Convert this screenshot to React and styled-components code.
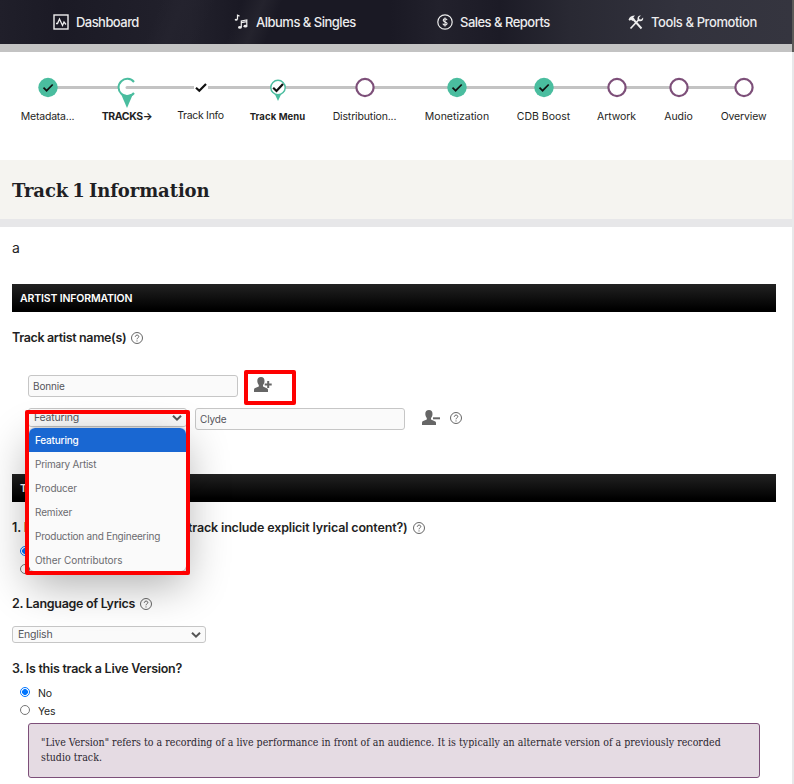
import React from "react"
import styled, { createGlobalStyle, css } from "styled-components"

const GlobalStyle = createGlobalStyle`
  * {
    box-sizing: border-box;
  }

  body {
    margin: 0;
    background: #fff;
    color: #1f1f24;
    font-family: Inter, "Liberation Sans", Arial, sans-serif;
    font-size: 11px;
    overflow: hidden;
  }
`

const Page = styled.div`
  width: 794px;
  height: 784px;
  display: grid;
  grid-template-columns: 792px 2px;
  overflow: hidden;
`

const Scrollbar = styled.div`
  background: linear-gradient(#5b5a58 52px, #e8e8ea 52px);
`

const Main = styled.main`
  overflow: hidden;
`

const Nav = styled.nav`
  height: 52px;
  padding-left: 53px;
  display: grid;
  grid-template-columns: 181px 203px 191px auto;
  border-bottom: 8px solid #c3c3c3;
  background:
    linear-gradient(112deg, transparent 150px, #24232e 170px, transparent 200px),
    linear-gradient(112deg, transparent 225px, #24232d 245px, transparent 262px),
    linear-gradient(90deg, #201f2a 0, #1b1a25 60px, #22212c 190px, #1a1924 240px, #1a1924 390px, #22212c 440px, #1c1b26 500px, #292933 570px, #32323d 680px, #35353f 792px);
  background-clip: padding-box;
`

const NavItem = styled.a`
  display: flex;
  align-items: center;
  gap: ${(p) => p.$gap}px;
  height: 44px;
  color: #ececee;
  font-size: 13px;
  font-weight: 500;
  letter-spacing: ${(p) => p.$spacing}px;
  white-space: nowrap;

  svg {
    flex: none;
  }

  span {
    padding-bottom: 1px;
  }
`

const Steps = styled.ol`
  height: 108px;
  margin: 0;
  padding: 24px 0 0 21px;
  display: flex;
  gap: 26px;
  list-style: none;
  background: linear-gradient(#c3c3c3, #c3c3c3) no-repeat 47px 34px / 696px 3px;
`

const Step = styled.li`
  width: ${(p) => p.$width}px;
  flex: none;
  display: flex;
  flex-direction: column;
  align-items: center;

  svg {
    display: block;
    flex: none;
  }
`

const StepLabel = styled.span`
  margin-top: ${(p) => (p.$raised ? 0 : 1)}px;
  font-size: ${(p) => p.$size || 10.5}px;
  line-height: 16px;
  font-weight: ${(p) => (p.$bold ? 700 : 400)};
  letter-spacing: ${(p) => p.$spacing || 0}px;
  white-space: nowrap;
`

const TitleBar = styled.header`
  height: 67px;
  padding-left: 12px;
  background: #f5f4f0;
  border-bottom: 8px solid #e7e7e9;
`

const Title = styled.h1`
  margin: 0;
  font-family: "DejaVu Serif", serif;
  font-size: 18px;
  line-height: 61px;
  font-weight: 700;
  letter-spacing: -0.1px;
  word-spacing: -2px;
`

const Content = styled.section`
  padding: 0 16px 0 12px;
`

const TrackName = styled.p`
  height: 57px;
  margin: 0;
  font-size: 14px;
  line-height: 42px;
`

const SectionBar = styled.h2`
  height: 28px;
  margin: 0;
  padding-left: 8px;
  color: #fff;
  background: linear-gradient(#222, #000 90%);
  font-size: 10.5px;
  line-height: 29px;
  font-weight: 600;
  letter-spacing: -0.15px;
`

const Question = styled.h3`
  height: ${(p) => p.$height}px;
  margin: 0;
  padding-top: ${(p) => p.$top}px;
  display: flex;
  align-items: flex-start;
  font-size: 12.5px;
  line-height: 20px;
  font-weight: 600;
  letter-spacing: ${(p) => p.$spacing || 0}px;
  white-space: nowrap;

  svg {
    margin: ${(p) => p.$iconTop || 4}px 0 0 5px;
  }
`

const QuestionLead = styled.span`
  width: 176px;
  overflow: hidden;
`

const Artists = styled.div`
  margin: 0 0 44px 16px;
  display: grid;
  gap: 11px;
`

const ArtistRow = styled.div`
  height: 22px;
  display: flex;
  align-items: flex-start;
`

const fieldStyle = css`
  border: 1px solid #c6c6c6;
  border-radius: 3px;
  background: #fafafa;
  color: #55555a;
  font-size: 10px;
`

const TextField = styled.input`
  ${fieldStyle}
  width: 210px;
  height: 22px;
  padding: 0 4px 1px;
  font-family: inherit;
  letter-spacing: -0.15px;
  outline: none;
`

const SelectField = styled.div`
  ${fieldStyle}
  width: ${(p) => p.$width}px;
  height: ${(p) => p.$height}px;
  padding: 0 4px 0 5px;
  display: flex;
  align-items: center;
  justify-content: space-between;
  font-size: 10.5px;
  letter-spacing: -0.2px;
`

const SelectWrap = styled.div`
  position: relative;
  width: 167px;
`

const Menu = styled.ul`
  position: absolute;
  top: 20px;
  left: 1px;
  width: 157px;
  height: 143px;
  margin: 0;
  padding: 0;
  list-style: none;
  overflow: hidden;
  border-radius: 6px;
  background: #fafafa;
`

const MenuShadow = styled.div`
  position: absolute;
  top: 20px;
  left: 1px;
  width: 157px;
  height: 143px;
  border-radius: 6px;
  box-shadow: 0 14px 44px rgba(0, 0, 0, 0.32), 0 0 3px rgba(0, 0, 0, 0.35);
`

const MenuItem = styled.li`
  height: 24px;
  padding-left: 6px;
  color: ${(p) => (p.$active ? "#fff" : "#6b6b6f")};
  background: ${(p) => (p.$active ? "#1967d2" : "transparent")};
  font-size: 10px;
  font-weight: ${(p) => (p.$active ? 500 : 400)};
  line-height: 25px;
  letter-spacing: ${(p) => p.$spacing || 0}px;
  white-space: nowrap;
`

const Highlight = styled.div`
  position: absolute;
  top: ${(p) => p.$top}px;
  left: ${(p) => p.$left}px;
  width: ${(p) => p.$width}px;
  height: ${(p) => p.$height}px;
  border: 4px solid #fe0000;
  border-radius: 2px;
`

const AddArtist = styled.span`
  position: relative;
  margin: 1px 0 0 16px;
`

const RemoveArtist = styled.span`
  margin: 1px 0 0 17px;
`

const RowHelp = styled.span`
  margin: 4px 0 0 10px;
`

const Option = styled.label`
  height: 18px;
  padding-left: 8px;
  display: flex;
  align-items: center;
  gap: 8px;
  font-size: 10.5px;
  letter-spacing: -0.2px;

  span {
    padding-top: 2px;
  }
`

const Radio = styled.i`
  width: 10px;
  height: 10px;
  border: 1px solid ${(p) => (p.$checked ? "#0075ff" : "#767676")};
  border-radius: 50%;
  background: ${(p) =>
    p.$checked ? "radial-gradient(#0075ff 2.6px, #fff 3.2px)" : "#fff"};
`

const Note = styled.p`
  width: 732px;
  height: 55px;
  margin: 4px 0 0 16px;
  padding: 11px 12px;
  border: 1px solid #7d4f79;
  border-radius: 3px;
  background: #e5dbe3;
  color: #2b2630;
  font-family: "DejaVu Serif Condensed", "DejaVu Serif", serif;
  font-stretch: condensed;
  font-size: 10.5px;
  line-height: 15px;
  letter-spacing: 0.04px;
  white-space: pre-line;
`

const HelpIcon = () => (
  <svg width="12" height="12" viewBox="0 0 12 12" fill="none" stroke="#555" strokeWidth="0.9">
    <circle cx="6" cy="6" r="5.5" />
    <path d="M4.3 4.8c0-2.3 3.5-2.2 3.5-.2C7.8 5.8 6 5.9 6 7.3M6 8.4v1.1" />
  </svg>
)

const Chevron = () => (
  <svg width="10" height="8" viewBox="0 0 10 8" fill="none" stroke="#555" strokeWidth="2">
    <path d="M1 1.7 5 5.6 9 1.7" />
  </svg>
)

const PersonIcon = ({ remove }) => (
  <svg width="18" height="18" viewBox="0 0 18 18" fill="#666">
    <path d="M7 1C4.6 1 3.2 2.4 3.3 4.9c.1 1.9.7 3 1.5 4v1.7L.6 12.3Q0 12.700 0 14v2h14v-2q0-1.300-.7-1.600L9 10.600V8.900c.9-1 1.500-2.200 1.500-4C10.600 2.400 9.300 1 7 1z" />
    {remove ? (
      <path d="M11 8.300h7v2h-7z" />
    ) : (
      <path d="M13.200 5h2v2.500h2.500v2h-2.500V12h-2V9.500h-2.500v-2h2.500z" />
    )}
  </svg>
)

const DashboardIcon = () => (
  <svg width="16" height="16" viewBox="0 0 16 16" fill="none" stroke="#eee">
    <rect x="1" y="1" width="14" height="14" strokeWidth="1.4" />
    <path d="M3 9.500h1.500L6.500 5l3 6.500L11 8l2 2.500" strokeWidth="1.3" />
  </svg>
)

const MusicIcon = () => (
  <svg width="14" height="16" viewBox="0 0 14 16" fill="#eee" stroke="#eee">
    <path d="M3.500 5.500V1.200l2 .9M7.300 13V7l5.500-1v6M7.300 8.700l5.500-1" fill="none" strokeWidth="1.2" />
    <ellipse cx="2.2" cy="5.8" rx="1.5" ry="1" stroke="none" />
    <ellipse cx="5.9" cy="13.4" rx="1.9" ry="1.4" stroke="none" />
    <ellipse cx="11.4" cy="12.2" rx="1.9" ry="1.4" stroke="none" />
  </svg>
)

const SalesIcon = () => (
  <svg width="16" height="16" viewBox="0 0 16 16" fill="none" stroke="#eee">
    <circle cx="8" cy="8" r="7.2" strokeWidth="1.2" />
    <path d="M10 6.200C9.700 4.300 6.200 4.400 6.200 6.300c0 2 3.900 1.200 3.900 3.300 0 2-3.800 2.100-4.200 0M8 3.600v8.800" strokeWidth="1.1" />
  </svg>
)

const ToolsIcon = () => (
  <svg width="16" height="16" viewBox="0 0 16 16" fill="none" stroke="#eee">
    <path d="M5 5l8.500 9.500" strokeWidth="1.9" />
    <path d="M.5 5.800C1.500 2.800 3.600 1.500 7 1.500L5.300 3.400l1.300 1.700-2.200 2-1.400-1.300-1.200 1z" fill="#eee" stroke="none" />
    <path d="M2.500 14.500l8-8.500" strokeWidth="1.7" />
    <path d="M12.900 1.500 11 3.600l.4 1.700 1.700.3 2-2.100c.6 2.300-.9 4.100-3.300 3.800L9.900 7 9.500 5c-.2-2.200 1.300-3.800 3.400-3.500z" fill="#eee" stroke="none" />
  </svg>
)

// Every marker shares one 32px tall canvas so the labels line up below it
const Marker = ({ kind }) => (
  <svg width="22" height="32" viewBox="-11 -11.500 22 32">
    {kind === "done" && (
      <>
        <circle r="9.7" fill="#4abd9f" />
        <path d="M-4.500.2-1.400 3.200 4.700-3" fill="none" stroke="#111" strokeWidth="1.7" />
      </>
    )}
    {kind === "open" && (
      <circle r="8.6" fill="#fff" stroke="#7d4f79" strokeWidth="2.2" />
    )}
    {kind === "current" && (
      <>
        <rect x="-9" y="-6" width="9" height="12" fill="#fff" />
        <path d="M-6 6.500h12L0 20.500z" fill="#4abd9f" />
        <circle r="7.6" fill="#fff" />
        <path d="M0-1.500h11v3H0a1.500 1.500 0 0 1 0-3z" fill="#c3c3c3" />
        <path d="M7-5.500A8.700 8.700 0 1 0 7 5.500" fill="none" stroke="#4abd9f" strokeWidth="2" />
      </>
    )}
    {kind === "check" && (
      <>
        <rect x="-7" y="-5" width="14" height="10" fill="#fff" />
        <path d="M-5 .3-1.700 3.300 5-3.500" fill="none" stroke="#111" strokeWidth="2.2" />
      </>
    )}
    {kind === "pin" && (
      <>
        <path d="M-3.500 6h7L0 13.500z" fill="#4abd9f" />
        <circle r="7.2" fill="#fff" stroke="#4abd9f" strokeWidth="1.4" />
        <path d="M-4.800.3-1.500 3.500 5-3.500" fill="none" stroke="#111" strokeWidth="2.2" />
      </>
    )}
  </svg>
)

const steps = [
  { label: "Metadata...", kind: "done", width: 53, spacing: -0.2 },
  { label: "TRACKS→", kind: "current", width: 54, bold: true, spacing: -0.4 },
  { label: "Track Info", kind: "check", width: 41, raised: true, spacing: -0.3 },
  { label: "Track Menu", kind: "pin", width: 61, bold: true, size: 9.5, spacing: 0.1 },
  { label: "Distribution...", kind: "open", width: 61, spacing: -0.15 },
  { label: "Monetization", kind: "done", width: 72 },
  { label: "CDB Boost", kind: "done", width: 49 },
  { label: "Artwork", kind: "open", width: 45, spacing: -0.1 },
  { label: "Audio", kind: "open", width: 27 },
  { label: "Overview", kind: "open", width: 51, spacing: -0.15 },
]

const roles = [
  { name: "Featuring", spacing: -0.2 },
  { name: "Primary Artist", spacing: -0.24 },
  { name: "Producer", spacing: -0.2 },
  { name: "Remixer", spacing: -0.15 },
  { name: "Production and Engineering", spacing: -0.23 },
  { name: "Other Contributors", spacing: -0.05 },
]

const YesNo = () => (
  <>
    <Option>
      <Radio $checked />
      <span>No</span>
    </Option>
    <Option>
      <Radio />
      <span>Yes</span>
    </Option>
  </>
)

const App = () => {
  return (
    <Page>
      <GlobalStyle />
      <Main>
        <Nav>
          <NavItem $gap={7} $spacing={-0.55}>
            <DashboardIcon />
            <span>Dashboard</span>
          </NavItem>
          <NavItem $gap={8} $spacing={-0.5}>
            <MusicIcon />
            <span>Albums &amp; Singles</span>
          </NavItem>
          <NavItem $gap={7} $spacing={-0.52}>
            <SalesIcon />
            <span>Sales &amp; Reports</span>
          </NavItem>
          <NavItem $gap={7} $spacing={-0.4}>
            <ToolsIcon />
            <span>Tools &amp; Promotion</span>
          </NavItem>
        </Nav>
        <Steps>
          {steps.map((s) => (
            <Step key={s.label} $width={s.width}>
              <Marker kind={s.kind} />
              <StepLabel $bold={s.bold} $raised={s.raised} $size={s.size} $spacing={s.spacing}>
                {s.label}
              </StepLabel>
            </Step>
          ))}
        </Steps>
        <TitleBar>
          <Title>Track 1 Information</Title>
        </TitleBar>
        <Content>
          <TrackName>a</TrackName>
          <SectionBar>ARTIST INFORMATION</SectionBar>
          <Question $height={63} $top={16} $spacing={-0.35}>
            Track artist name(s)
            <HelpIcon />
          </Question>
          <Artists>
            <ArtistRow>
              <TextField defaultValue="Bonnie" />
              <AddArtist>
                <PersonIcon />
                <Highlight $top={-6} $left={-10} $width={52} $height={35} />
              </AddArtist>
            </ArtistRow>
            <ArtistRow>
              <SelectWrap>
                <SelectField $width={159} $height={19}>
                  Featuring
                  <Chevron />
                </SelectField>
                <MenuShadow />
                <Menu>
                  {roles.map((role, i) => (
                    <MenuItem key={role.name} $active={i === 0} $spacing={role.spacing}>
                      {role.name}
                    </MenuItem>
                  ))}
                </Menu>
                <Highlight $top={2} $left={-3} $width={165} $height={165} />
              </SelectWrap>
              <TextField defaultValue="Clyde" />
              <RemoveArtist>
                <PersonIcon remove />
              </RemoveArtist>
              <RowHelp>
                <HelpIcon />
              </RowHelp>
            </ArtistRow>
          </Artists>
          <SectionBar>T</SectionBar>
          <Question $height={40} $top={16} $iconTop={4} $spacing={-0.16}>
            <QuestionLead>1. I</QuestionLead>
            track include explicit lyrical content?)
            <HelpIcon />
          </Question>
          <YesNo />
          <Question $height={48} $top={16} $spacing={-0.3}>
            2. Language of Lyrics
            <HelpIcon />
          </Question>
          <SelectField $width={194} $height={17}>
            English
            <Chevron />
          </SelectField>
          <Question $height={40} $top={16} $spacing={-0.27}>
            3. Is this track a Live Version?
          </Question>
          <YesNo />
          <Note>
            {`"Live Version" refers to a recording of a live performance in front of an audience. It is typically an alternate version of a previously recorded
            studio track.`}
          </Note>
        </Content>
      </Main>
      <Scrollbar />
    </Page>
  )
}

export default App
